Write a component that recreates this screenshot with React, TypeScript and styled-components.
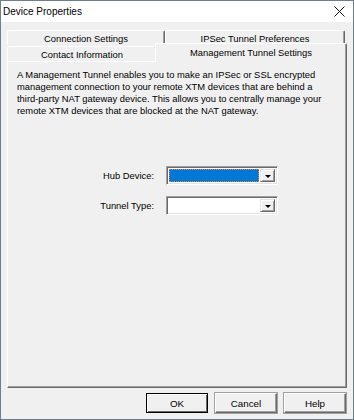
import React from 'react';
import styled, { createGlobalStyle, css } from 'styled-components';

const GlobalStyle = createGlobalStyle`
  html, body {
    margin: 0;
    padding: 0;
    background: #ffffff;
  }
  * {
    box-sizing: border-box;
  }
`;

const FONT = `'Liberation Sans', Arial, sans-serif`;

const Window = styled.div`
  width: 354px;
  height: 420px;
  border: 1px solid #6e7e8e;
  background: #f0f0f0;
  display: flex;
  flex-direction: column;
  font-family: ${FONT};
  font-size: 10px;
  color: #000;
`;

const TitleBar = styled.div`
  height: 21px;
  background: #ffffff;
  display: flex;
  align-items: center;
  justify-content: space-between;
  padding: 0 8px 0 2px;
`;

const Title = styled.div`
  font-size: 10px;
  line-height: 12px;
  margin-top: 1px;
`;

const CloseButton = styled.div`
  width: 12px;
  height: 12px;
  display: flex;
  align-items: center;
  justify-content: center;
`;

const Body = styled.div`
  flex: 1;
  display: flex;
  flex-direction: column;
  padding: 8px 6px 0 6px;
`;

const TabStrip = styled.div`
  display: flex;
  flex-direction: column;
`;

const TabRow = styled.div<{ $h: number }>`
  display: flex;
  height: ${(p) => p.$h}px;
  align-items: flex-start;
`;

const Tab = styled.div<{ $w: number; $selected?: boolean; $top?: number }>`
  width: ${(p) => p.$w}px;
  height: 15px;
  margin-top: ${(p) => p.$top || 0}px;
  background: #f0f0f0;
  border-top: 1px solid #ffffff;
  border-left: 1px solid #ffffff;
  border-right: 1px solid #696969;
  border-top-left-radius: 2px;
  border-top-right-radius: 2px;
  box-shadow: inset -1px 0 0 #a0a0a0;
  display: flex;
  align-items: center;
  justify-content: center;
  font-size: 9.4px;
  line-height: 11px;
  white-space: nowrap;
  ${(p) =>
    p.$selected &&
    css`
      position: relative;
      z-index: 1;
      height: 19px;
      margin-top: -2px;
      margin-left: -2px;
      padding-bottom: 2px;
    `}
`;

const Panel = styled.div`
  flex: 1;
  border-top: 1px solid #ffffff;
  border-left: 1px solid #ffffff;
  border-right: 1px solid #696969;
  border-bottom: 1px solid #696969;
  box-shadow: inset -1px -1px 0 #a0a0a0;
  padding: 7px 9px 0 9px;
  display: flex;
  flex-direction: column;
`;

const Intro = styled.p`
  margin: 0;
  font-size: 9.4px;
  line-height: 12px;
  white-space: nowrap;
`;

const Form = styled.div`
  display: grid;
  grid-template-columns: 146px 112px;
  column-gap: 12px;
  row-gap: 11px;
  margin: 49px 0 0 -9px;
  align-items: center;
`;

const Label = styled.div`
  text-align: right;
  font-size: 9.4px;
`;

const Combo = styled.div`
  height: 19px;
  display: flex;
  background: #ffffff;
  border-top: 1px solid #a0a0a0;
  border-left: 1px solid #a0a0a0;
  border-right: 1px solid #ffffff;
  border-bottom: 1px solid #ffffff;
  box-shadow: inset 1px 1px 0 #696969, inset -1px -1px 0 #e3e3e3;
  padding: 2px;
`;

const ComboValue = styled.div<{ $focused?: boolean }>`
  flex: 1;
  margin-right: 1px;
  ${(p) =>
    p.$focused &&
    css`
      background: #0078d7;
      border: 1px dotted #f07a3a;
    `}
`;

const DropButton = styled.div`
  width: 15px;
  background: #f0f0f0;
  border-top: 1px solid #e3e3e3;
  border-left: 1px solid #e3e3e3;
  border-right: 1px solid #696969;
  border-bottom: 1px solid #696969;
  box-shadow: inset 1px 1px 0 #ffffff, inset -1px -1px 0 #a0a0a0;
  display: flex;
  align-items: center;
  justify-content: center;
`;

const Arrow = styled.div`
  width: 0;
  height: 0;
  border-left: 3px solid transparent;
  border-right: 3px solid transparent;
  border-top: 3px solid #000;
  margin-top: 1px;
`;

const Footer = styled.div`
  height: 31px;
  display: flex;
  justify-content: flex-end;
  align-items: flex-start;
  gap: 7px;
  padding: 5px 1px 0 0;
`;

const Button = styled.div<{ $default?: boolean; $w: number }>`
  width: ${(p) => p.$w}px;
  height: 20px;
  background: #f0f0f0;
  display: flex;
  align-items: center;
  justify-content: center;
  font-size: 9.8px;
  border-top: 1px solid #ffffff;
  border-left: 1px solid #ffffff;
  border-right: 1px solid #696969;
  border-bottom: 1px solid #696969;
  box-shadow: inset -1px -1px 0 #a0a0a0;
  outline: 1px solid #a0a0a0;
  ${(p) =>
    p.$default &&
    css`
      border: 1px solid #000;
      outline: none;
      box-shadow: inset 1px 1px 0 #ffffff, inset -1px -1px 0 #696969;
    `}
`;

function CloseIcon() {
  return (
    <svg width="11" height="11" viewBox="0 0 11 11">
      <path d="M0.5 0.5 L10.5 10.5 M10.5 0.5 L0.5 10.5" stroke="#111" strokeWidth="1" fill="none" />
    </svg>
  );
}

export default function App() {
  return (
    <>
      <GlobalStyle />
      <Window>
        <TitleBar>
          <Title>Device Properties</Title>
          <CloseButton>
            <CloseIcon />
          </CloseButton>
        </TitleBar>
        <Body>
          <TabStrip>
            <TabRow $h={15}>
              <Tab $w={158}>Connection Settings</Tab>
              <Tab $w={180}>IPSec Tunnel Preferences</Tab>
            </TabRow>
            <TabRow $h={16}>
              <Tab $w={150} $top={1}>
                Contact Information
              </Tab>
              <Tab $w={192} $selected>
                Management Tunnel Settings
              </Tab>
            </TabRow>
          </TabStrip>
          <Panel>
            <Intro>
              A Management Tunnel enables you to make an IPSec or SSL encrypted
              <br />
              management connection to your remote XTM devices that are behind a
              <br />
              third-party NAT gateway device. This allows you to centrally manage your
              <br />
              remote XTM devices that are blocked at the NAT gateway.
            </Intro>
            <Form>
              <Label>Hub Device:</Label>
              <Combo>
                <ComboValue $focused />
                <DropButton>
                  <Arrow />
                </DropButton>
              </Combo>
              <Label>Tunnel Type:</Label>
              <Combo>
                <ComboValue />
                <DropButton>
                  <Arrow />
                </DropButton>
              </Combo>
            </Form>
          </Panel>
          <Footer>
            <Button $default $w={62}>
              OK
            </Button>
            <Button $w={62}>Cancel</Button>
            <Button $w={62}>Help</Button>
          </Footer>
        </Body>
      </Window>
    </>
  );
}
